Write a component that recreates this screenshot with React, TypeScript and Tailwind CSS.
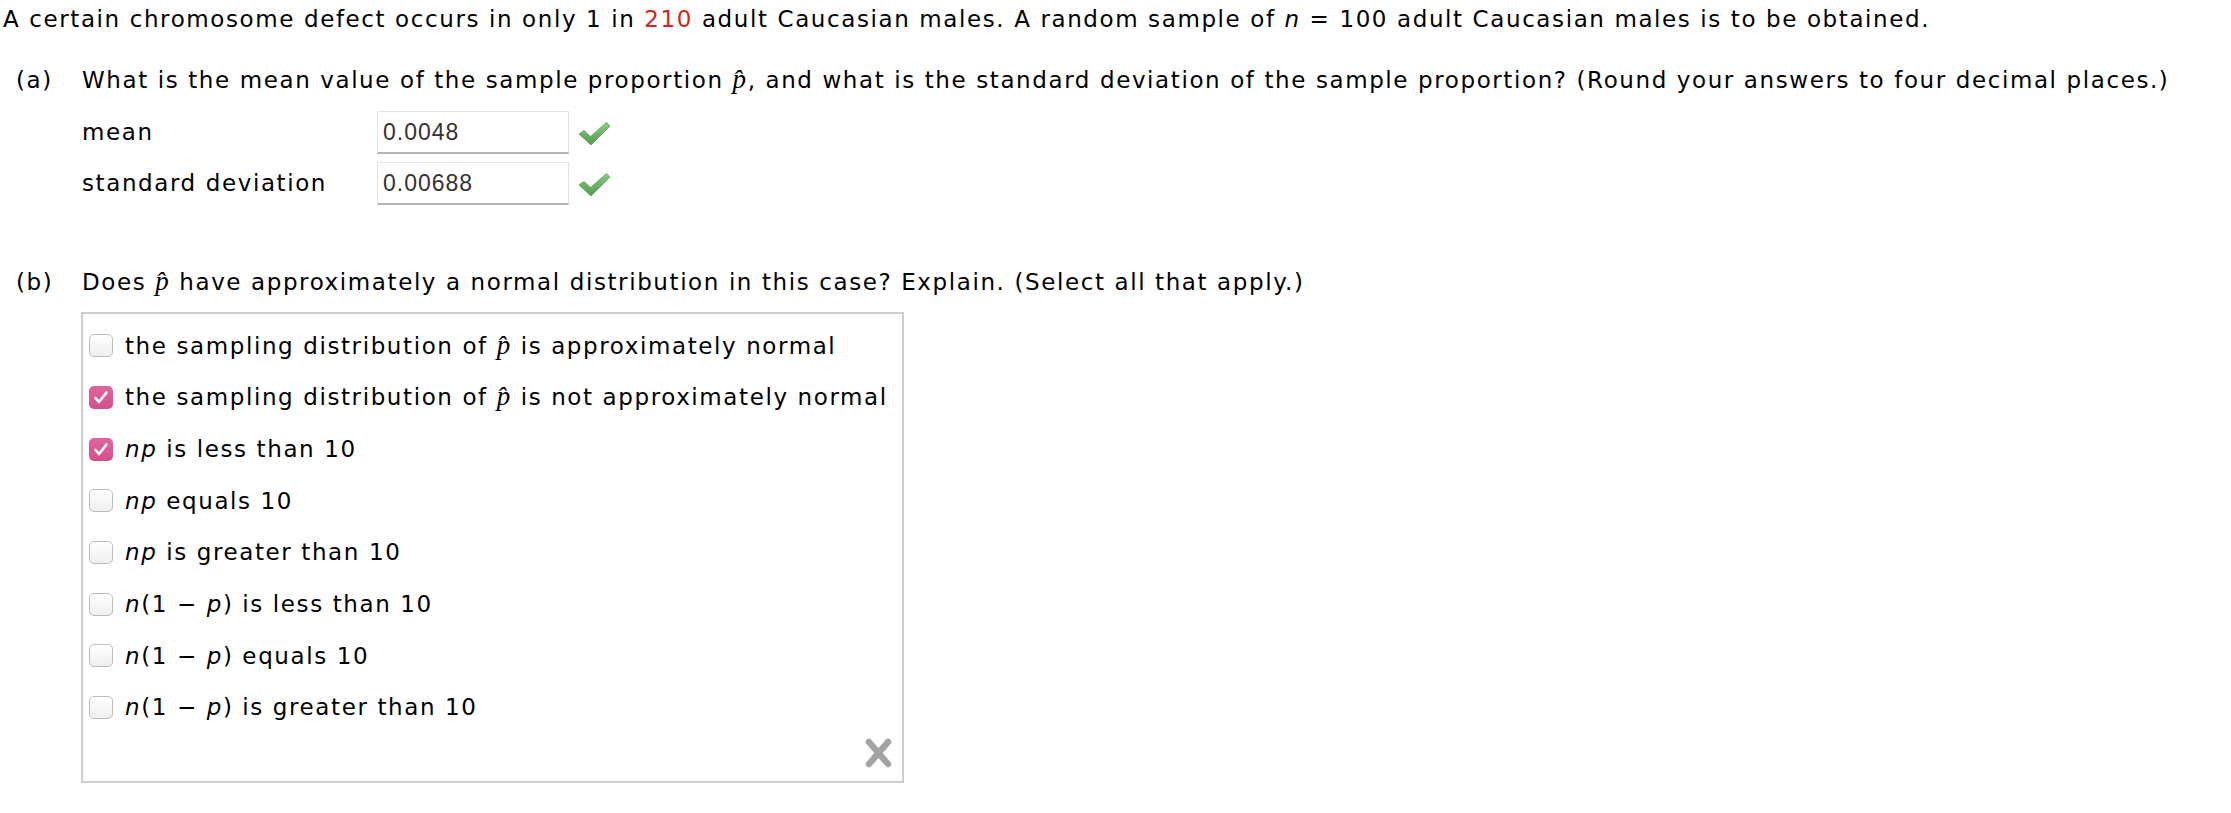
import React from "react";

const options = [
  { key: "a", checked: false, label: <>the sampling distribution of <PHat /> is approximately normal</> },
  { key: "b", checked: true, label: <>the sampling distribution of <PHat /> is not approximately normal</> },
  { key: "c", checked: true, label: <><i>np</i> is less than 10</> },
  { key: "d", checked: false, label: <><i>np</i> equals 10</> },
  { key: "e", checked: false, label: <><i>np</i> is greater than 10</> },
  { key: "f", checked: false, label: <><i>n</i>(1 − <i>p</i>) is less than 10</> },
  { key: "g", checked: false, label: <><i>n</i>(1 − <i>p</i>) equals 10</> },
  { key: "h", checked: false, label: <><i>n</i>(1 − <i>p</i>) is greater than 10</> },
];

function PHat() {
  return <span className="font-['Liberation_Serif',serif] italic text-[27px] leading-none">p&#770;</span>;
}

function GreenCheck() {
  return (
    <svg width="33" height="25" viewBox="0 0 33 25" className="shrink-0">
      <defs>
        <linearGradient id="gc" x1="0" y1="0" x2="0" y2="1">
          <stop offset="0" stopColor="#8ccc7f" />
          <stop offset="1" stopColor="#4f9a4f" />
        </linearGradient>
      </defs>
      <path
        d="M1 13 L6 9.5 L12.5 15.5 L28.5 1.5 L32 5 L13 24 Z"
        fill="url(#gc)"
        stroke="#5a9f57"
        strokeWidth="0.8"
        strokeLinejoin="round"
      />
    </svg>
  );
}

function AnswerRow({ label, value }: { label: string; value: string }) {
  return (
    <div className="flex items-center">
      <div className="w-[295px]">{label}</div>
      <div className="w-[192px] h-[43px] flex items-center pl-[5px] border border-[#e3e3e3] border-b-2 border-b-[#b5b5b5] bg-white font-['Liberation_Sans',Arial,sans-serif] text-[23px] tracking-[1px] text-[#333]">
        {value}
      </div>
      <div className="ml-[9px] mt-[2px]">
        <GreenCheck />
      </div>
    </div>
  );
}

function Checkbox({ checked }: { checked: boolean }) {
  if (checked) {
    return (
      <div className="w-[24px] h-[23px] rounded-[5px] bg-gradient-to-b from-[#e2649f] to-[#d44f8c] flex items-center justify-center shrink-0">
        <svg width="16" height="15" viewBox="0 0 16 15">
          <path d="M2.5 8 L6 12 L13.5 2.5" fill="none" stroke="white" strokeWidth="2.6" strokeLinecap="round" strokeLinejoin="round" />
        </svg>
      </div>
    );
  }
  return <div className="w-[24px] h-[23px] rounded-[5px] border border-[#bdbdbd] bg-gradient-to-b from-white to-[#efefef] shrink-0" />;
}

export default function App() {
  return (
    <div className="font-['DejaVu_Sans',Verdana,sans-serif] text-[23px] tracking-[1.6px] text-black bg-white w-[2231px] h-[813px] pl-[3px]">
      <p className="pt-[5px] leading-[28px] whitespace-nowrap">
        A certain chromosome defect occurs in only 1 in <span className="text-[#d3261b]">210</span> adult Caucasian males. A random
        sample of <i>n</i> = 100 adult Caucasian males is to be obtained.
      </p>

      <div className="flex mt-[33px] ml-[13px] leading-[28px]">
        <div className="w-[66px]">(a)</div>
        <div className="whitespace-nowrap">
          What is the mean value of the sample proportion <PHat />, and what is the standard deviation of the sample proportion? (Round your
          answers to four decimal places.)
        </div>
      </div>

      <div className="ml-[79px] mt-[17px] flex flex-col gap-[8px]">
        <AnswerRow label="mean" value="0.0048" />
        <AnswerRow label="standard deviation" value="0.00688" />
      </div>

      <div className="flex mt-[63px] ml-[13px] leading-[28px]">
        <div className="w-[66px]">(b)</div>
        <div className="whitespace-nowrap">
          Does <PHat /> have approximately a normal distribution in this case? Explain. (Select all that apply.)
        </div>
      </div>

      <div className="ml-[78px] mt-[16px] w-[823px] h-[471px] border-2 border-[#cdcdcd] flex flex-col">
        <div className="pt-[6px] pl-[6px]">
          {options.map((o) => (
            <div key={o.key} className="h-[51.7px] flex items-center gap-[12px] whitespace-nowrap">
              <Checkbox checked={o.checked} />
              <span>{o.label}</span>
            </div>
          ))}
        </div>
        <div className="mt-auto flex justify-end pr-[10px] pb-[13px]">
          <svg width="27" height="30" viewBox="0 0 27 30">
            <path d="M4 4 L23 26 M23 4 L4 26" stroke="#a3a3a3" strokeWidth="6.5" strokeLinecap="round" />
          </svg>
        </div>
      </div>
    </div>
  );
}
